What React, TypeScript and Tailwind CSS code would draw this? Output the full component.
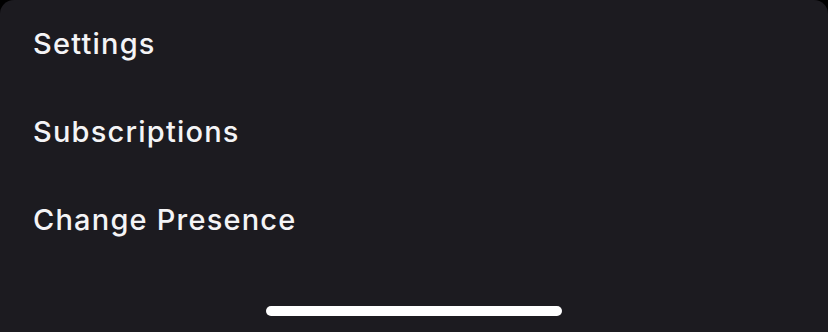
import React from 'react';

const items = ['Settings', 'Subscriptions', 'Change Presence'];

const App: React.FC = () => {
  return (
    <div className="w-[828px] h-[332px] bg-black">
      <div
        className="relative w-full h-full bg-[#1c1b20] rounded-t-[14px] flex flex-col"
        style={{ fontFamily: 'Inter, "Liberation Sans", sans-serif' }}
      >
        <ul className="flex flex-col -mt-px">
          {items.map(label => (
            <li key={label} className="h-[88px] flex items-center px-[33px]">
              <span className="text-[29px] leading-none font-medium text-[#f4f4f6] tracking-[1.2px]">{label}</span>
            </li>
          ))}
        </ul>
        <div className="mt-auto mb-[16px] flex justify-center">
          <div className="w-[296px] h-[10px] rounded-full bg-white" />
        </div>
      </div>
    </div>
  );
};

export default App;
